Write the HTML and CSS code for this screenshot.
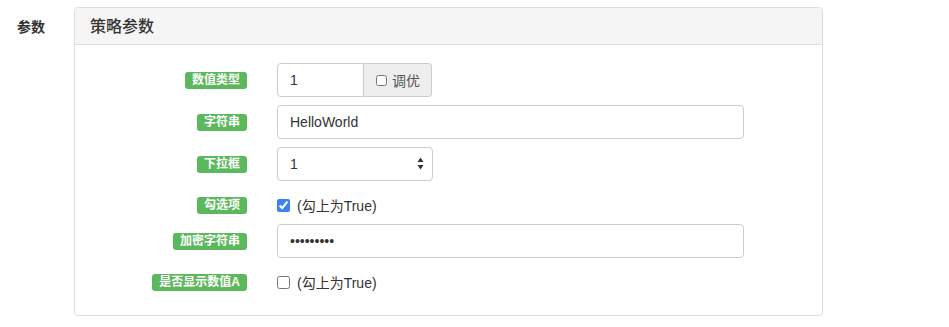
FILE: index.html
```html
<!DOCTYPE html>
<html>
  <head>
    <title>策略参数</title>
    <link rel="stylesheet" href="styles.css">
  </head>
  <body>
    <div class="param-group">
      <div class="param-title">参数</div>
      <div class="panel">
        <div class="panel-heading">策略参数</div>
        <div class="panel-body">
          <div class="form-row">
            <div class="form-label"><span class="badge">数值类型</span></div>
            <div class="input-group">
              <input class="form-control num-input" type="text" value="1">
              <label class="addon"><input type="checkbox" class="addon-check">调优</label>
            </div>
          </div>
          <div class="form-row">
            <div class="form-label"><span class="badge">字符串</span></div>
            <input class="form-control wide" type="text" value="HelloWorld">
          </div>
          <div class="form-row">
            <div class="form-label"><span class="badge">下拉框</span></div>
            <div class="select-wrap">
              <select class="form-control select">
                <option>1</option>
                <option>2</option>
                <option>3</option>
              </select>
              <svg class="select-arrow" width="7" height="13" viewBox="0 0 7 13">
                <path d="M3.5 0.5 L6.5 5 L0.5 5 Z" fill="#333"/>
                <path d="M3.5 12.5 L6.5 8 L0.5 8 Z" fill="#333"/>
              </svg>
            </div>
          </div>
          <div class="form-row check-row">
            <div class="form-label"><span class="badge">勾选项</span></div>
            <label class="check"><input type="checkbox" checked>(勾上为True)</label>
          </div>
          <div class="form-row">
            <div class="form-label"><span class="badge">加密字符串</span></div>
            <input class="form-control wide" type="password" value="123456789">
          </div>
          <div class="form-row check-row">
            <div class="form-label"><span class="badge">是否显示数值A</span></div>
            <label class="check"><input type="checkbox">(勾上为True)</label>
          </div>
        </div>
      </div>
    </div>
  </body>
</html>
```

FILE: styles.css
```css
body {
  margin: 0;
  background-color: #fff;
  color: #333;
  font-family: "Liberation Sans", "Noto Sans CJK SC", sans-serif;
  font-size: 14px;
}

.param-group {
  display: flex;
  padding-top: 7px;
}

.param-title {
  width: 57px;
  padding: 9px 0 0 17px;
  font-weight: bold;
  font-size: 14px;
}

.panel {
  width: 747px;
  border: 1px solid #ddd;
  border-radius: 4px;
  background-color: #fff;
}

.panel-heading {
  background-color: #f5f5f5;
  border-bottom: 1px solid #ddd;
  border-radius: 3px 3px 0 0;
  padding: 10px 15px 9px;
  font-size: 16px;
  font-weight: 500;
  line-height: 17px;
  height: 17px;
}

.panel-body {
  display: flex;
  flex-direction: column;
  gap: 8px;
  padding: 18px 15px 22px;
}

.form-row {
  display: grid;
  grid-template-columns: 157px 467px;
  column-gap: 30px;
  align-items: center;
  height: 34px;
}

.check-row {
  height: 27px;
  box-sizing: border-box;
  padding-top: 5px;
}

.form-label {
  text-align: right;
}

.badge {
  display: inline-block;
  background-color: #5cb85c;
  color: #fff;
  font-size: 12px;
  font-weight: bold;
  line-height: 13px;
  padding: 2px 7px 2px;
  border-radius: 3px;
  vertical-align: middle;
}

.form-control {
  box-sizing: border-box;
  height: 34px;
  border: 1px solid #ccc;
  border-radius: 4px;
  padding: 6px 12px;
  font-family: inherit;
  font-size: 14px;
  color: #333;
  background-color: #fff;
  outline: none;
}

.wide {
  width: 467px;
}

.input-group {
  display: flex;
  width: 155px;
}

.num-input {
  width: 87px;
  border-radius: 4px 0 0 4px;
}

.addon {
  box-sizing: border-box;
  width: 68px;
  height: 34px;
  display: flex;
  align-items: center;
  padding: 0 0 0 12px;
  white-space: nowrap;
  background-color: #eee;
  border: 1px solid #ccc;
  border-left: none;
  border-radius: 0 4px 4px 0;
  color: #555;
}

.addon-check {
  width: 11px;
  height: 11px;
  margin: 0 5px 0 0;
}

.select-wrap {
  position: relative;
  width: 156px;
}

.select {
  width: 156px;
  appearance: none;
  -webkit-appearance: none;
}

.select-arrow {
  position: absolute;
  right: 9px;
  top: 10px;
  pointer-events: none;
}

.check {
  display: flex;
  align-items: center;
  color: #333;
}

.check input {
  width: 13px;
  height: 13px;
  margin: 0 7px 0 0;
  accent-color: #3a82f7;
}
```
